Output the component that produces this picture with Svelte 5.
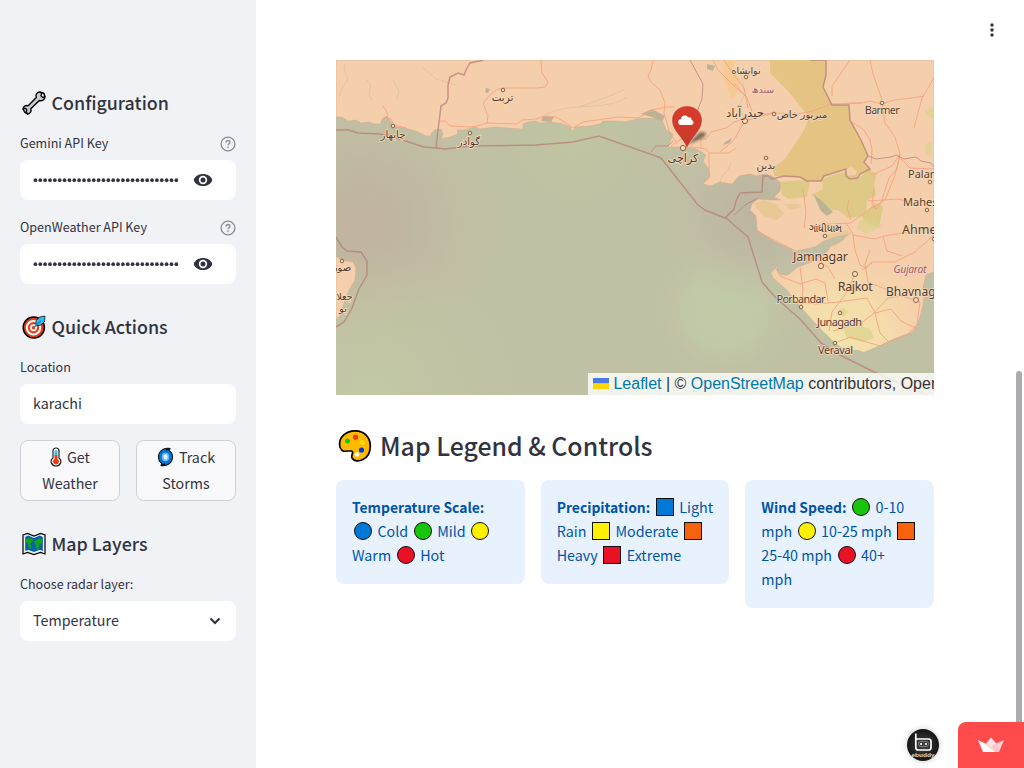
<script>
  const keyFields = ['Gemini API Key', 'OpenWeather API Key'];
  const legends = [
    { title: 'Temperature Scale:', lines: [
      [],
      [{ s: 'circle', c: '#0078d7' }, 'Cold', { s: 'circle', c: '#16c60c' }, 'Mild', { s: 'circle', c: '#fff100' }],
      ['Warm', { s: 'circle', c: '#e81224' }, 'Hot'] ] },
    { title: 'Precipitation:', lines: [
      [{ s: 'square', c: '#0078d7' }, 'Light'],
      ['Rain', { s: 'square', c: '#fff100' }, 'Moderate', { s: 'square', c: '#f7630c' }],
      ['Heavy', { s: 'square', c: '#e81224' }, 'Extreme'] ] },
    { title: 'Wind Speed:', lines: [
      [{ s: 'circle', c: '#16c60c' }, '0-10'],
      ['mph', { s: 'circle', c: '#fff100' }, '10-25 mph', { s: 'square', c: '#f7630c' }],
      ['25-40 mph', { s: 'circle', c: '#e81224' }, '40+'],
      ['mph'] ] }
  ];
  const cities = [
    { t: 'تربت', x: 502.5, y: 101, f: 10.3, cx: 503, cy: 90 },
    { t: 'چابهار', x: 393, y: 138, f: 10.2, cx: 393, cy: 126 },
    { t: 'گوادر', x: 469, y: 145, f: 10.2, cx: 470, cy: 133 },
    { t: 'نوابشاه', x: 746, y: 74, f: 9.5, cx: 746, cy: 77 },
    { t: 'حيدرآباد', x: 745, y: 117, f: 11.8, cx: 745, cy: 121, r: 2.6 },
    { t: 'ميرپور خاص', x: 802, y: 118, f: 10, cx: 774, cy: 114 },
    { t: 'بدين', x: 766, y: 169, f: 10.2, cx: 766, cy: 158 },
    { t: 'کراچی', x: 683, y: 162, f: 11.2, cx: 683, cy: 148, r: 2.7 },
    { t: 'صور', x: 342, y: 271, f: 10, cx: 342, cy: 261 },
    { t: 'جعلان', x: 341, y: 300, f: 9.5 },
    { t: 'بو', x: 343, y: 312, f: 9.5 },
    { t: 'Barmer', x: 882.3, y: 114, f: 11, w: 35, cx: 882, cy: 103 },
    { t: 'Palanpur', x: 908, y: 178, f: 11, a: 'start', cx: 930, cy: 182 },
    { t: 'Mahesana', x: 903, y: 206, f: 11, a: 'start', cx: 927, cy: 210 },
    { t: 'Ahmedabad', x: 902, y: 234, f: 12.5, a: 'start', cx: 934, cy: 239 },
    { t: 'ગાંધીધામ', x: 825, y: 232, f: 10, cx: 825, cy: 236 },
    { t: 'Jamnagar', x: 820.5, y: 261, f: 12.5, w: 55, cx: 821, cy: 266, r: 2.6 },
    { t: 'Rajkot', x: 855.3, y: 290.5, f: 12.5, w: 35, cx: 855, cy: 274, r: 2.6 },
    { t: 'Bhavnagar', x: 886, y: 295.5, f: 12, a: 'start', cx: 916, cy: 300, r: 2.5 },
    { t: 'Porbandar', x: 801, y: 303, f: 11, w: 49, cx: 801, cy: 307 },
    { t: 'Junagadh', x: 839.5, y: 326, f: 11, w: 45, cx: 840, cy: 313 },
    { t: 'Veraval', x: 835.5, y: 354, f: 11, w: 35, cx: 835, cy: 343 }
  ];
  const coast = 'M336 60V117L342 117 348 121 356 120 361 123 369 122 374 124 380 124 383 118 388 117 391 122 393 126 405 128 418 132 426 136 430 136 434 130 441 129 443 134 441 139 450 137 458 134 457 130 464 130 475 127 480 129 495 127 508 128 523 129 523 124 529 122 536 121 540 123 551 122 563 124 570 127 573 132 575 127 590 126 600 124 603 121 615 121 625 122 637 119 645 118 657 119 663 122 666 130 673 134 668 147 680 147 697 149 706 155 703 161 709 169 710 176 703 184 711 186 719 182 732 184 739 176 750 174 756 176 765 174 772 176 781 183 780 191 774 197 781 200 770 200 758 199 752 204 750 210 756 216 757 230 775 242 796 251 815 247 824 241 832 238 848 234 842 241 831 246 826 253 812 262 798 267 788 275 781 275 777 270 777 266 771 273 773 278 786 289 801 307 818 326 835 343 846 350 858 350 864 352 876 347 893 339 912 332 918 323 923 305 924 294 923 287 926 275 934 272V60Z';
  const roads = [
    'M383 122l2-5 3-1-2-6-3-4M385 117l6 2 3 6 13 3M440 121h5l5 5 20 1 7-1 10-3 30 1 5-4 15-1',
    'M536 88h-33l-7 2-7 6-6 7 3 8 2 5-1 7M541 60l1 13 6 9-3 5-9 1',
    'M536 119l8-3 12 1 10 6 7 5 10-6 35-5 20 1 15-8 12-3 10 0M653 60l-2 10-3 6 3 6 9 8 5 13-1 10 6 21 7 9M683 148l10-1 13 2 3 4 20 0 7-5M671 146l10-7 25 0 5-7 15-4 8-6 20-6 18-3M709 153v25l-6 5M701 138v10M720 152l13-11 12-20',
    'M713 60l5 10 15 15 8 7 6 6M724 60l8 12 12 16 4 20M745 121l28-8 24 1 16-3 18-7 31-1M734 83l13 15 5 13',
    'M850 60l-18 26 0 10M849 103h13l8-2 12 3 12-4 18-2 12-2M870 60l3 14 9 26M882 103l3 20 10 14 5 17-3 15-8 9-8 25-5 6-4-5 2-16M934 78l-12 20-8 30M900 154l-8 12-20 9M900 158l10 10 24 1',
    'M852 122l12 8 6 10 2 10-1 14M868 201l30-2 15 4M900 155l-5 20-10 25-15 9-19 14-24 1M803 188l3 25-2 15M849 200l-2 8 4 12',
    'M757 231l15 8 20 10M846 223l7 11 2 16 5 15 6 3M853 235l22 4 9-3 50-8M866 268l6-6 23 0 20-10 19-17M883 236l4 15 15 5M775 267l5 9 20 8 16-5 9 4 3 18M800 267l3 22-2 18M855 274l-8 18-15 20-3 19M801 302l15 2 22-2 29-4M862 270l10-7M867 298l8 15 5 20 10 10M875 313l16-4 10 12 17 8M835 343l15-6 30 9 28-12 9-10 3-22-18-6-14 2-15 16-12 9-28 8M870 250l-5 14 3 18 20 8M813 257l15 10 7 12'
  ];
</script>

{#snippet shape(i)}
  <svg class="token" viewBox="0 0 20 20">
    {#if i.s === 'circle'}<circle cx="10" cy="10" r="8.500" fill={i.c} stroke="#101010" stroke-width="1" />
    {:else}<rect x="1.500" y="1.500" width="17" height="17" fill={i.c} stroke="#101010" stroke-width="1" />{/if}
  </svg>
{/snippet}

<div class="page">
  <aside>
    <h3>
      <svg class="emoji" viewBox="0 0 24 24"><path d="M17.500 1c-2.700.4-4.200 2.700-3.200 5.500L6.200 14.800C3.500 14 1.200 15.500 1 18l2.300-.7 1.500 1.500L4 21.500l1.700 1.600c2.600-.7 3.800-3 3.100-5.400l8.500-8.200c3 .8 5.200-.8 5.700-3.500l-2.300.4-1.700-1.700.8-2.500z" fill="#ccc" stroke="#000" stroke-width="1.400" stroke-linejoin="round" /><path d="M17.500 1l3 1M1 18l2 3.500 3 1.500M23 6l-1-3.500-2-1" fill="none" stroke="#000" stroke-width="1.500" /></svg>
      <span>Configuration</span>
    </h3>
    {#each keyFields as label, i}
      <div class="field" class:second={i === 1}>
        <div class="label"><span>{label}</span>
          <svg class="help" width="16" height="16" viewBox="0 0 16 16" fill="none" stroke="#8b8d97" stroke-width="1.400"><circle cx="8" cy="8" r="6.900" /><path d="M6.100 6.400c0-2.600 3.900-2.500 3.800-.2 0 1.400-1.900 1.600-1.900 3.100M8 10.400v1.500" /></svg>
        </div>
        <div class="input key">
          <svg class="dots" width="145" height="8" viewBox="0 0 145 8">
            {#each Array(30) as _, n}<circle cx={2.4 + n * 4.86} cy="4.200" r="1.850" fill="#31333f" />{/each}
          </svg>
          <svg class="eye" width="20" height="14" viewBox="0 0 20 14"><path d="M.7 7C3.200-1 16.800-1 19.300 7 16.800 15 3.200 15 .7 7z" fill="#31333f" /><circle cx="10" cy="7" r="4.200" fill="#fff" /><circle cx="10" cy="7" r="2.500" fill="#31333f" /></svg>
        </div>
      </div>
    {/each}
    <h3 class="next">
      <svg class="emoji" viewBox="0 0 24 24"><circle cx="11.800" cy="12.500" r="10.600" fill="#f03a17" stroke="#000" stroke-width="1.500" /><circle cx="11.500" cy="12.800" r="6.700" fill="none" stroke="#fff" stroke-width="2" /><circle cx="11.500" cy="12.800" r="2.600" fill="#f03a17" stroke="#fff" stroke-width="1.700" /><path d="M14 9V6l3.500-4 5.500-1-.5 6-4.500 3.500h-3z" fill="#28c0ee" stroke="#000" stroke-width=".7" /><path d="M11.500 12.800l7.500-7" stroke="#1685c9" stroke-width="1.500" /></svg>
      <span>Quick Actions</span>
    </h3>
    <div class="field">
      <div class="label"><span>Location</span></div>
      <div class="input">karachi</div>
    </div>
    <div class="buttons">
      <button><span class="line"><svg width="12" height="20" viewBox="0 0 12 20"><path d="M3 4c0-4 6-4 6 0v7c4 3 1 8-3 8s-7-5-3-8z" fill="#fff" stroke="#222" stroke-width="1.200" /><path d="M4.500 3.500h3V8h-3z" fill="#35bce7" /><path d="M4.500 8h3v4c3 2 1 5.500-1.500 5.500S1.500 14 4.500 12z" fill="#f03a17" /></svg>Get</span><span class="line">Weather</span></button>
      <button><span class="line"><svg width="17" height="20" viewBox="0 0 17 20"><path d="M13 1.500C6.500 0 1.500 4.500 1.500 10c0 3.500 1.500 5.500 3.500 6.500L4 18.500c6.500 1 11.500-3 11.500-8.500 0-3-1.500-5.500-3.500-6.500z" fill="#0078d7" stroke="#111" stroke-width="1.100" stroke-linejoin="round" /><path d="M13 1.500L9 3M4 18.500l4-1.500" fill="none" stroke="#111" stroke-width="1.800" /><ellipse cx="8.500" cy="10" rx="3.700" ry="4.200" fill="#69b7ef" /><ellipse cx="8.500" cy="10" rx="2.100" ry="2.700" fill="#e5f4ff" /></svg>Track</span><span class="line">Storms</span></button>
    </div>
    <h3 class="next">
      <svg class="emoji" viewBox="0 0 24 24"><path d="M1 3l4.500-1.500L12 4l6.500-2.500L23 3v19l-4.500-1.500L12 22.500l-6.500-2L1 22z" fill="#eee" stroke="#000" stroke-width="1.200" /><path d="M3.200 5l3-1.500L12 6l5.800-2.500 3 1.500v14l-3-1.200L12 20l-5.800-2.200-3 1.200z" fill="#0063b1" /><path d="M4 7l4-1 3 1.500-1 3L7.500 12l2 2-1 3-2-1.500L6 12 4 10zM13 9l5-3 2 2v3l-3 2-.5 4-1.500 1-1-5-2-1z" fill="#16a60c" /></svg>
      <span>Map Layers</span>
    </h3>
    <div class="field">
      <div class="label"><span>Choose radar layer:</span></div>
      <div class="input select">Temperature
        <svg width="12" height="8" viewBox="0 0 12 8"><path d="M1.500 1.500L6 6l4.500-4.500" fill="none" stroke="#31333f" stroke-width="2.100" /></svg>
      </div>
    </div>
  </aside>

  <main>
    <div class="map">
      <svg width="598" height="335" viewBox="336 60 598 335">
        <defs>
          <radialGradient id="warm" gradientUnits="userSpaceOnUse" cx="362" cy="225" r="125"><stop offset="0" stop-color="#c1b39e" /><stop offset=".4" stop-color="#c0b5a0" stop-opacity=".8" /><stop offset="1" stop-color="#c0b9a2" stop-opacity="0" /></radialGradient>
          <radialGradient id="green" gradientUnits="userSpaceOnUse" cx="725" cy="310" r="70"><stop offset="0" stop-color="#c0cba8" /><stop offset=".55" stop-color="#c0caa8" stop-opacity=".8" /><stop offset="1" stop-color="#c0c4a5" stop-opacity="0" /></radialGradient>
          <radialGradient id="greenWest" gradientUnits="userSpaceOnUse" cx="370" cy="395" r="150"><stop offset="0" stop-color="#c2c8a4" /><stop offset="1" stop-color="#c2c6a4" stop-opacity="0" /></radialGradient>
          <radialGradient id="greenNorth" gradientUnits="userSpaceOnUse" cx="575" cy="140" r="90"><stop offset="0" stop-color="#bfc5a1" /><stop offset="1" stop-color="#bfc2a3" stop-opacity="0" /></radialGradient>
          <radialGradient id="gulf" gradientUnits="userSpaceOnUse" cx="755" cy="210" r="95"><stop offset="0" stop-color="#bcb49f" /><stop offset=".5" stop-color="#bfb8a2" stop-opacity=".7" /><stop offset="1" stop-color="#c0c1a4" stop-opacity="0" /></radialGradient>
          <radialGradient id="south" gradientUnits="userSpaceOnUse" cx="840" cy="340" r="100"><stop offset="0" stop-color="#f3e5ab" /><stop offset=".5" stop-color="#f4dfac" stop-opacity=".8" /><stop offset="1" stop-color="#f5cfab" stop-opacity="0" /></radialGradient>
          <linearGradient id="pin" x2="0" y2="1"><stop stop-color="#d83c2c" /><stop offset="1" stop-color="#c9382a" /></linearGradient>
          <filter id="soft"><feGaussianBlur stdDeviation="1.600" /></filter>
          <clipPath id="shore"><path d={coast} /></clipPath>
        </defs>
        <path d="M336 60h598v335H336z" fill="#c0c0a4" />
        <path d="M336 60h598v335H336z" fill="url(#warm)" />
        <path d="M336 60h598v335H336z" fill="url(#greenWest)" />
        <path d="M336 60h598v335H336z" fill="url(#greenNorth)" />
        <path d="M336 60h598v335H336z" fill="url(#green)" />
        <path d="M336 60h598v335H336z" fill="url(#gulf)" />
        <g class="land">
          <path d={coast} />
          <path d="M336 256l5 4 12 2 3 6-1 12-6 10-5 13-3 12-5 4z" />
        </g>
        <g clip-path="url(#shore)">
          <path d="M740 240h194v130H740z" fill="url(#south)" />
          <path d="M770 60h56l0 15-3 12 9 18h17l1 15 11 20 7 16-4 6 6 7-10 5-2 4-8 1-4-3 0-7-22 7-3 5h-14l-7-4-26-1-1-8 12-9 18-27 6-13-5-8-16-20-18-18z" fill="#e5c382" />
          <path d="M847 176l-2-6 6-3 6 4-2 4z" fill="#f5cfab" />
          <path d="M724 60h12l-4 10 10 11-5 11-5 8-8-20z" fill="#f6cb93" />
          <path d="M822 179l24-8 4 8 10-1 8-9 9 5-3 10 2 11-9 5-1 16-18 2-10-8-11 0-6-8-10-7 12-6zM862 217l12-14 9 3-4 22-14-5zM780 182l20-2 10 1-3 16-18 2-7-4z" fill="#deca86" />
          <path d="M754 203l10-3 13 5 7 9-7 6-13-4-7-7zM784 204l14 0 4 3-12 3zM828 235l18-5 6 3-12 8-5 6-7-4z" fill="#e2c68d" opacity=".7" />
          <path d="M843 329l15-4 12 4 4 9-12 4-15-4zM838 310l6-2 4 4-5 5zM860 220l16 0 6 6-16 8-9-5zM925 110l9-3v12l-9-5zM925 145l6-4 1 15-6-2z" fill="#dcd28b" opacity=".7" />
          <path d="M814 195l8 6 7 7 4 4-6 4-6-5-3-6zM641 114l11-5 13 7-3 6-10-5zM707 64l8 2-2 5-6-2zM543 116l11 1-3 5-10-1zM486 88l4 1-2 4-3-1zM725 142l7-4-2 5-7 2z" fill="#bcb397" />
        </g>
        <g class="roads">{#each roads as d}<path {d} />{/each}</g>
        <path d="M345 64c-4 10 7 12 0 20s-3 13-7 12M367 80c8 8-3 12 5 20M393 80l6 11-2 8M422 67l14 12 20 6M545 115c26-14 60-3 82-18M579 107l28-10 17-7M720 185c1-14 6-8 11-22M741 73l4 21-6 12 5 12-8 20" class="creek" />
        <g class="borders">
          <path d="M484 60L470 63 466 70 464 75 458 73 450 77 448 85 448 98 446 103 441 106 438 130 436 148" />
          <path d="M336 130L349 130 358 133 380 134 396 138 424 147 436 148 445 149 470 146 536 145 573 142 599 136 650 154 661 158 698 205 705 210 725 218 734 209 736 201 740 193 762 192 763 176 768 176 772 179 784 176 800 177 807 181 821 181 824 176 846 169 846 176 850 179 858 178 860 174 870 169 864 162 868 156 861 140 850 120 849 105 832 105 823 87 826 75 826 60 810 60" />
          <path class="thin" d="M868 156l8 3 15-2 5-2 8 4 12-2 5 4 10 2 3 4M651 152l5-6 12 0 5-5M690 60l7 13 6 11-1 15-4 10-2 13M734 215l11-10 13-7" />
          <path d="M725 217L734 225 748 237 762 282 775 297 801 320 821 343 840 355 874 372 934 398M336 237l6 10 5 4 14 1 6 9 0 14-8 14-7 19-8 14-8 5" />
        </g>
        <g class="cities">
          {#each cities as c}
            {#if c.cx}<circle cx={c.cx} cy={c.cy} r={c.r || 1.8} />{/if}
            <text x={c.x} y={c.y} font-size={c.f} text-anchor={c.a || 'middle'} textLength={c.w}>{c.t}</text>
          {/each}
          <text class="region" x="763" y="93" font-size="9.500" text-anchor="middle">سندھ</text>
          <text class="region latin" x="910" y="273" font-size="10.500" text-anchor="middle" textLength="33">Gujarat</text>
        </g>
        <path d="M687 145l11-11c4-4 10-1 7 2-4 3-11 6-18 9z" fill="#333" opacity=".65" filter="url(#soft)" />
        <path d="M687 147c-4-10-14-16-14.500-26C672 112 679 106.500 687 106.500S702 112 701.500 121C701 131 691 137 687 147z" fill="url(#pin)" stroke="#b8352b" stroke-width=".5" />
        <path d="M681.500 125a3 3 0 0 1-.5-6c0-4 6-4.500 7-1.500 2.500-1 4 1 3.500 2.500 3 1 2.500 5-.5 5z" fill="#fff" />
      </svg>
      <div class="credit">
        <svg width="16" height="11" viewBox="0 0 17 11" preserveAspectRatio="none"><path d="M0 0h17v5.500H0z" fill="#4c7be1" /><path d="M0 5.500h17V11H0z" fill="#ffd500" /></svg>
        <span class="link">Leaflet</span> | © <span class="link">OpenStreetMap</span> contributors, OpenWeatherMap
      </div>
    </div>

    <h2>
      <svg width="34" height="34" viewBox="0 0 34 34"><path d="M17.500 1.800C8 1.500 1 8.500 1.600 16c.3 5 3.400 7 7.400 6h4.500c3 1-1 4 .5 7 2 3.500 7 3.500 11 1.500 5-2.500 7.300-8 7.300-13.500C32.300 8 26 2 17.500 1.800z" fill="#ffb900" stroke="#000" stroke-width="1.700" /><circle cx="17.500" cy="8.200" r="2.600" fill="#f03a17" /><circle cx="9.500" cy="12" r="2.500" fill="#16c60c" /><circle cx="24.500" cy="13.500" r="2.500" fill="#fff100" opacity=".65" /><circle cx="23.500" cy="21" r="2.600" fill="#0037da" /><circle cx="19" cy="25.500" r="2.300" fill="#fff" /></svg>
      <span>Map Legend &amp; Controls</span>
    </h2>
    <div class="cards">
      {#each legends as card}
        <section class="card">
          {#each card.lines as line, i}
            <div class="row">{#if i === 0}<b>{card.title}</b>{/if}{#each line as item}{#if item.s}{@render shape(item)}{:else}<span>{item}</span>{/if}{/each}</div>
          {/each}
        </section>
      {/each}
    </div>
  </main>

  <svg class="menu" width="4" height="14" viewBox="0 0 4 14" fill="#31333f"><circle cx="2" cy="2" r="1.700" /><circle cx="2" cy="7" r="1.700" /><circle cx="2" cy="12" r="1.700" /></svg>
  <div class="scrollbar"></div>
  <div class="avatar">
    <svg width="32" height="32" viewBox="0 0 32 32"><defs><radialGradient id="disc"><stop stop-color="#444" /><stop offset="1" stop-color="#151515" /></radialGradient></defs><circle cx="16" cy="16" r="16" fill="url(#disc)" /><path d="M8.800 4.500v14q0 2.500 2.500 2.500h10.200q2.500 0 2.500-2.500v-6q0-2.500-2.500-2.500H9" fill="none" stroke="#fff" stroke-width="1.700" /><rect x="11.500" y="12.500" width="10" height="5" rx="2" fill="none" stroke="#aaa" stroke-width=".6" /><circle cx="14" cy="15" r="1.100" fill="#fff" /><circle cx="19" cy="15" r="1.100" fill="#fff" /><text x="16" y="27.500" text-anchor="middle" textLength="23" lengthAdjust="spacingAndGlyphs">ebuddy</text></svg>
  </div>
  <div class="host"><svg width="28" height="16" viewBox="0 0 28 16"><path d="M1 3l7 3.500L19 15H6z" fill="#fff" /><path d="M14 .5L8.500 7l11 8L19 6z" fill="#ffe4e5" /><path d="M27 3l-8 3.500-2 6L19.500 15h2.500z" fill="#ffd0d3" /><path d="M14.500 9.500L20 6l2 9h-2.500z" fill="#ffc3c7" /></svg></div>
</div>

<style>
  :global(body) { margin: 0; background: #fff; overflow: hidden; }
  .page { position: relative; display: flex; width: 1024px; height: 768px; overflow: hidden; color: #31333f; font: 14.300px/24px "Noto Sans CJK SC", sans-serif; }
  aside { box-sizing: border-box; width: 256px; flex: none; padding: 87px 20px 0; background: #f0f2f6; }
  h3 { display: flex; align-items: center; gap: 5.500px; height: 32px; margin: 0 0 12px; padding-left: 2px; font-size: 17.850px; font-weight: 500; white-space: nowrap; }
  h3 span, h2 span { padding-bottom: 2px; }
  h3.next { margin-top: 27px; }
  .emoji { width: 24px; height: 24px; flex: none; }
  .field.second { margin-top: 15px; }
  .label { display: flex; justify-content: space-between; align-items: center; height: 24px; margin-bottom: 5px; font-size: 12.550px; }
  .help { margin-top: 1px; }
  .input { box-sizing: border-box; display: flex; align-items: center; height: 40px; padding: 0 13px 2px; background: #fff; border-radius: 8px; }
  .key { padding-bottom: 0; }
  .eye { margin-left: 15px; }
  .select { justify-content: space-between; padding-right: 15px; }
  .select svg { margin-top: 2px; }
  .buttons { display: grid; grid-template-columns: 1fr 1fr; gap: 16px; margin-top: 16px; }
  button { display: flex; flex-direction: column; align-items: center; justify-content: center; height: 61px; padding: 0 0 2px; font: inherit; line-height: 26px; color: inherit; background: #f9f9fb; border: 1px solid #d0d2d7; border-radius: 8px; }
  .line { display: flex; align-items: center; gap: 5px; height: 26px; }
  main { width: 598px; padding: 60px 0 0 80px; }
  .map { position: relative; height: 334.600px; overflow: hidden; }
  .map > svg { display: block; }
  .land { fill: #f5cfab; stroke: #d2a88b; stroke-width: .5; }
  .roads { fill: none; stroke: #f7a180; stroke-width: .9; }
  .creek { fill: none; stroke: #c4b498; stroke-width: .6; opacity: .7; }
  .borders { fill: none; stroke: #b87f78; stroke-width: 1.500; opacity: .75; }
  .borders .thin { stroke-width: 1; }
  .cities circle { fill: #f5d8b4; stroke: #7b5940; stroke-width: .9; }
  .cities text { font-family: "Noto Sans", "DejaVu Sans", sans-serif; fill: #553d2b; stroke: #f5d9bb; stroke-width: 1.600; paint-order: stroke; }
  .cities .region { fill: #a25b70; }
  .cities .latin { font-style: italic; }
  .credit { position: absolute; left: 252px; bottom: 0; box-sizing: border-box; height: 21.500px; padding-left: 5px; white-space: nowrap; color: #333; background: rgba(255,255,255,.8); font: 16px/21px "Liberation Sans", sans-serif; }
  .link { color: #0078a8; }
  h2 { display: flex; align-items: center; gap: 8px; height: 40px; margin: 31.400px 0 14px; padding-left: 2px; font-size: 24.850px; font-weight: 500; white-space: nowrap; }
  .cards { display: grid; grid-template-columns: repeat(3, minmax(0, 1fr)); align-items: start; gap: 16px; }
  .card { padding: 15px 16px 17px; border-radius: 8px; background: #e8f2ff; color: #0054a3; }
  .row { display: flex; align-items: center; gap: 3.500px; height: 24px; white-space: nowrap; }
  .token { width: 20px; height: 20px; flex: none; padding: 0 1px; }
  b { font-size: 13.900px; font-weight: 700; }
  .menu { position: absolute; left: 990px; top: 23px; }
  .scrollbar { position: absolute; left: 1016px; top: 371px; width: 6px; height: 370px; border-radius: 3px; background: #abacb0; }
  .avatar { position: absolute; left: 907px; top: 729px; width: 32px; height: 32px; border-radius: 50%; box-shadow: 0 0 6px #0003; }
  .avatar text { font: bold 6px "Liberation Sans", sans-serif; fill: #ddd; }
  .host { position: absolute; left: 958px; top: 722px; display: flex; align-items: center; justify-content: center; width: 66px; height: 46px; background: #ff4b4b; border-radius: 8px 0 0; }
</style>
